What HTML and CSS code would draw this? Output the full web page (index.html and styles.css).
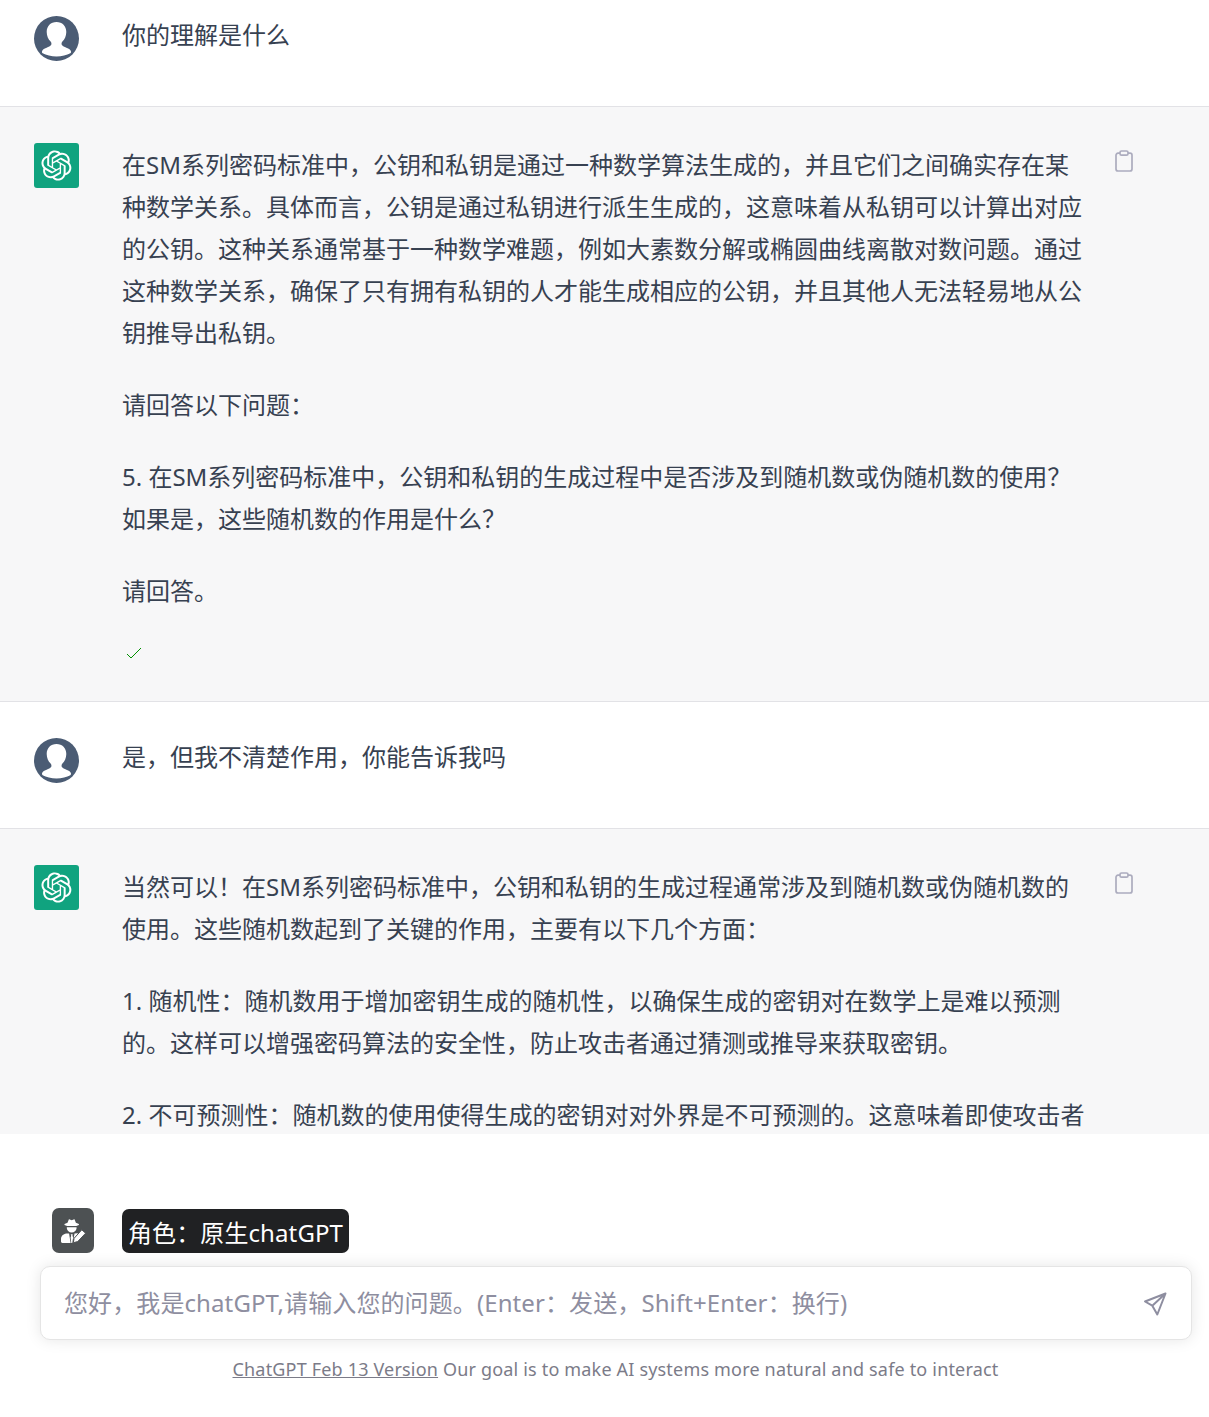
FILE: index.html
```html
<!DOCTYPE html>
<html lang="zh">
<head>
    <meta charset="utf-8">
    <title>ChatGPT</title>
    <link rel="stylesheet" href="styles.css">
</head>
<body>

    <svg class="defs" width="0" height="0">
        <symbol id="logo" viewBox="0 0 41 41">
            <path fill="currentColor" d="M37.5324 16.8707C37.9808 15.5241 38.1363 14.0974 37.9886 12.6859C37.8409 11.2744 37.3934 9.91076 36.676 8.68622C35.6126 6.83404 33.9882 5.3676 32.0373 4.4985C30.0864 3.62941 27.9098 3.40259 25.8215 3.85078C24.8796 2.7893 23.7219 1.94125 22.4257 1.36341C21.1295 0.785575 19.7249 0.491269 18.3058 0.500197C16.1708 0.495044 14.0893 1.16803 12.3614 2.42214C10.6335 3.67624 9.34853 5.44666 8.6917 7.47815C7.30085 7.76286 5.98686 8.3414 4.8377 9.17505C3.68854 10.0087 2.73073 11.0782 2.02839 12.312C0.956464 14.1591 0.498905 16.2988 0.721698 18.4228C0.944492 20.5467 1.83612 22.5449 3.268 24.1293C2.81966 25.4759 2.66413 26.9026 2.81182 28.3141C2.95951 29.7256 3.40701 31.0892 4.12437 32.3138C5.18791 34.1659 6.8123 35.6322 8.76321 36.5013C10.7141 37.3704 12.8907 37.5973 14.9789 37.1492C15.9208 38.2107 17.0786 39.0587 18.3747 39.6366C19.6709 40.2144 21.0755 40.5087 22.4946 40.4998C24.6307 40.5054 26.7133 39.8321 28.4418 38.5772C30.1704 37.3223 31.4556 35.5506 32.1119 33.5179C33.5027 33.2332 34.8167 32.6547 35.9659 31.821C37.115 30.9874 38.0728 29.9178 38.7752 28.684C39.8458 26.8371 40.3023 24.6979 40.0789 22.5748C39.8556 20.4517 38.9639 18.4544 37.5324 16.8707ZM22.4978 37.8849C20.7443 37.8874 19.0459 37.2733 17.6994 36.1501C17.7601 36.117 17.8666 36.0586 17.936 36.0161L25.9004 31.4156C26.1003 31.3019 26.2663 31.137 26.3813 30.9378C26.4964 30.7386 26.5563 30.5124 26.5549 30.2825V19.0542L29.9213 20.998C29.9389 21.0068 29.9541 21.0198 29.9656 21.0359C29.977 21.052 29.9842 21.0707 29.9867 21.0902V30.3889C29.9842 32.375 29.1946 34.2791 27.7909 35.6841C26.3872 37.0892 24.4838 37.8806 22.4978 37.8849ZM6.39227 31.0064C5.51397 29.4888 5.19742 27.7107 5.49804 25.9832C5.55718 26.0187 5.66048 26.0818 5.73461 26.1244L13.699 30.7248C13.8975 30.8408 14.1233 30.902 14.3532 30.902C14.583 30.902 14.8088 30.8408 15.0073 30.7248L24.731 25.1103V28.9979C24.7321 29.0177 24.7283 29.0376 24.7199 29.0556C24.7115 29.0736 24.6988 29.0893 24.6829 29.1012L16.6317 33.7497C14.9096 34.7416 12.8643 35.0097 10.9447 34.4954C9.02506 33.9811 7.38785 32.7263 6.39227 31.0064ZM4.29707 13.6194C5.17156 12.0998 6.55279 10.9364 8.19885 10.3327C8.19885 10.4013 8.19491 10.5228 8.19491 10.6071V19.808C8.19351 20.0378 8.25334 20.2638 8.36823 20.4629C8.48312 20.6619 8.64893 20.8267 8.84863 20.9404L18.5723 26.5542L15.206 28.4979C15.1894 28.5089 15.1703 28.5155 15.1505 28.5173C15.1307 28.5191 15.1107 28.516 15.0924 28.5082L7.04046 23.8557C5.32135 22.8601 4.06716 21.2235 3.55289 19.3046C3.03862 17.3858 3.30624 15.3413 4.29707 13.6194ZM31.955 20.0556L22.2312 14.4411L25.5976 12.4981C25.6142 12.4872 25.6333 12.4805 25.6531 12.4787C25.6729 12.4769 25.6928 12.4801 25.7111 12.4879L33.7631 17.1364C34.9967 17.849 36.0017 18.8982 36.6606 20.1613C37.3194 21.4244 37.6047 22.849 37.4832 24.2684C37.3617 25.6878 36.8382 27.0432 35.9743 28.1759C35.1103 29.3086 33.9415 30.1717 32.6047 30.6641C32.6047 30.5947 32.6047 30.4733 32.6047 30.3889V21.188C32.6066 20.9586 32.5474 20.7328 32.4332 20.5338C32.319 20.3348 32.154 20.1698 31.955 20.0556ZM35.3055 15.0128C35.2464 14.9765 35.1431 14.9142 35.069 14.8717L27.1045 10.2712C26.906 10.1554 26.6803 10.0943 26.4504 10.0943C26.2206 10.0943 25.9948 10.1554 25.7963 10.2712L16.0726 15.8858V11.9982C16.0715 11.9783 16.0753 11.9585 16.0837 11.9405C16.0921 11.9225 16.1048 11.9068 16.1207 11.8949L24.1719 7.25025C25.4053 6.53903 26.8158 6.19376 28.2383 6.25482C29.6608 6.31589 31.0364 6.78077 32.2044 7.59508C33.3723 8.40939 34.2842 9.53945 34.8334 10.8531C35.3826 12.1667 35.5464 13.6095 35.3055 15.0128ZM14.2424 21.9419L10.8752 19.9981C10.8576 19.9893 10.8423 19.9763 10.8309 19.9602C10.8195 19.9441 10.8122 19.9254 10.8098 19.9058V10.6071C10.8107 9.18295 11.2173 7.78848 11.9819 6.58696C12.7466 5.38544 13.8377 4.42659 15.1275 3.82264C16.4173 3.21869 17.8524 2.99464 19.2649 3.1767C20.6775 3.35876 22.0089 3.93941 23.1034 4.85067C23.0427 4.88379 22.937 4.94215 22.8668 4.98473L14.9024 9.58517C14.7025 9.69878 14.5366 9.86356 14.4215 10.0626C14.3065 10.2616 14.2466 10.4877 14.2479 10.7175L14.2424 21.9419ZM16.071 17.9991L20.4018 15.4978L24.7325 17.9975V22.9985L20.4018 25.4983L16.071 22.9985V17.9991Z"/>
        </symbol>
        <symbol id="person" viewBox="0 0 45 45">
            <circle cx="22.5" cy="22.5" r="22.5" fill="#4b5c74"/>
            <path fill="#fff" d="M22.5 6c-5.800 0-9.800 4.100-9.800 9.900 0 4 1.600 7.300 3.900 9.600 .9 .9 1.100 2.500 .5 3.500-.8 1.300-2.500 1.900-4.500 2.700-2.600 1-4.200 2-4.600 3.700-.2 .7 .1 1.400 .7 1.800 3.400 1.900 8.600 3.300 13.800 3.300s10.400-1.400 13.800-3.300c.6-.4 .9-1.100 .7-1.800-.4-1.700-2-2.700-4.600-3.700-2-.8-3.700-1.400-4.500-2.700-.6-1-.4-2.600 .5-3.500 2.300-2.300 3.900-5.600 3.900-9.600 0-5.800-4-9.900-9.800-9.900z"/>
        </symbol>
        <symbol id="clip" viewBox="0 0 18 22">
            <path fill="none" stroke="currentColor" stroke-width="1.700" stroke-linejoin="round" d="M5 3.200H3a2 2 0 0 0-2 2V19a2 2 0 0 0 2 2h12a2 2 0 0 0 2-2V5.200a2 2 0 0 0-2-2h-2"/>
            <rect x="5" y="1" width="8" height="4.200" rx="1.500" fill="none" stroke="currentColor" stroke-width="1.700"/>
        </symbol>
    </svg>

    <div class="chat">
        <div class="row">
            <svg class="avatar"><use href="#person"/></svg>
            <div class="text"><p>你的理解是什么</p></div>
        </div>

        <div class="row bot">
            <div class="avatar logo"><svg width="31" height="31"><use href="#logo"/></svg></div>
            <div class="text">
                <p>在SM系列密码标准中，公钥和私钥是通过一种数学算法生成的，并且它们之间确实存在某种数学关系。具体而言，公钥是通过私钥进行派生生成的，这意味着从私钥可以计算出对应的公钥。这种关系通常基于一种数学难题，例如大素数分解或椭圆曲线离散对数问题。通过这种数学关系，确保了只有拥有私钥的人才能生成相应的公钥，并且其他人无法轻易地从公钥推导出私钥。</p>
                <p>请回答以下问题：</p>
                <p>5. 在SM系列密码标准中，公钥和私钥的生成过程中是否涉及到随机数或伪随机数的使用？如果是，这些随机数的作用是什么？</p>
                <p>请回答。</p>
                <svg class="check" width="16" height="13" viewBox="0 0 16 13" shape-rendering="crispEdges"><path fill="none" stroke="#009000" stroke-width="1.400" d="M1 7l4 4L15 1"/></svg>
            </div>
            <svg class="copy"><use href="#clip"/></svg>
        </div>

        <div class="row">
            <svg class="avatar"><use href="#person"/></svg>
            <div class="text"><p>是，但我不清楚作用，你能告诉我吗</p></div>
        </div>

        <div class="row bot">
            <div class="avatar logo"><svg width="31" height="31"><use href="#logo"/></svg></div>
            <div class="text">
                <p>当然可以！在SM系列密码标准中，公钥和私钥的生成过程通常涉及到随机数或伪随机数的使用。这些随机数起到了关键的作用，主要有以下几个方面：</p>
                <p>1. 随机性：随机数用于增加密钥生成的随机性，以确保生成的密钥对在数学上是难以预测的。这样可以增强密码算法的安全性，防止攻击者通过猜测或推导来获取密钥。</p>
                <p>2. 不可预测性：随机数的使用使得生成的密钥对对外界是不可预测的。这意味着即使攻击者</p>
            </div>
            <svg class="copy"><use href="#clip"/></svg>
        </div>
    </div>

    <div class="bottom">
        <div class="role">
            <div class="role-icon">
                <svg width="26" height="26" viewBox="0 0 26 26">
                    <path fill="#fff" d="M7.500 4.800l1.200-3c.2-.5 .6-.6 1-.4l2 .9 2-.9c.4-.2 .8-.1 1 .4l1.200 3 3 1.200v1l-2.600 1H7.100L4.500 7V6z"/>
                    <path fill="#fff" d="M7.300 9.300h8.800c.5 0 .6 .4 .5 1-.4 2.500-2.300 4.200-4.900 4.200s-4.500-1.700-4.900-4.200c-.1-.6 0-1 .5-1z"/>
                    <path fill="#fff" d="M6.300 15.400l2.800 .2 1.500 9.400H2.400c-.8 0-1.400-.6-1.400-1.400v-2.500c0-3 2.200-5.300 5.300-5.700z"/>
                    <path fill="#fff" d="M10.700 16.200h2l-.2 1.600 .6 1.600-.8 5.600h-1l-.7-5.600 .6-1.600z"/>
                    <path fill="#fff" d="M14.500 15.600l2.800-.3 1 .4-4.800 5.500z"/>
                    <path fill="#fff" stroke="#4d5153" stroke-width="1" d="M21.800 11.800l3.800 3.400-7.900 8.400-4.400 1.100 .8-4.400z"/>
                </svg>
            </div>
            <div class="role-tag">角色：原生chatGPT</div>
        </div>

        <div class="input-box">
            <div class="placeholder">您好，我是chatGPT,请输入您的问题。(Enter：发送，Shift+Enter：换行)</div>
            <svg class="send" width="24" height="24" viewBox="0 0 24 24"><path fill="none" stroke="currentColor" stroke-width="2" stroke-linejoin="round" d="M22.500 1.500L2 9.500l7.300 4.200 5 8.800zM22.500 1.500L9.300 13.700"/></svg>
        </div>

        <div class="footer"><a href="#">ChatGPT Feb 13 Version</a> Our goal is to make AI systems more natural and safe to interact</div>
    </div>

</body>
</html>
```

FILE: styles.css
```css
body {
    margin: 0;
    background: #fff;
    color: #374151;
    font-family: "Noto Sans", "Noto Sans CJK SC", sans-serif;
    font-size: 24px;
}
.defs { position: absolute; }

.chat {
    height: 1134px;
    overflow: hidden;
}
.row {
    display: flex;
    align-items: flex-start;
    padding: 36px 0 45px 34px;
    border-bottom: 1px solid #e2e2e6;
}
.row:first-child { margin-top: -20px; }
.bot {
    background: #f7f7f8;
    padding-bottom: 41px;
}

.avatar {
    width: 45px;
    height: 45px;
    flex: none;
    margin-right: 43px;
}
.logo {
    display: flex;
    align-items: center;
    justify-content: center;
    background: #10a37f;
    border-radius: 3px;
    color: #fff;
}
.text {
    width: 964px;
    flex: none;
    margin-top: -2px;
}
.bot .text { margin-top: 1px; }
.text p {
    margin: 0 0 30px;
    line-height: 42px;
}
.text p:last-of-type { margin-bottom: 0; }
.check {
    display: block;
    margin: 35px 0 0 4px;
}
.copy {
    width: 18px;
    height: 22px;
    flex: none;
    margin: 7px 0 0 29px;
    color: #acacbe;
}

.bottom { padding-top: 74px; }
.role {
    display: flex;
    align-items: flex-start;
    padding-left: 52px;
}
.role-icon {
    width: 42px;
    height: 45px;
    flex: none;
    display: flex;
    align-items: center;
    justify-content: center;
    background: #4d5153;
    border-radius: 7px;
    margin-right: 28px;
}
.role-tag {
    background: #202123;
    color: #fff;
    border-radius: 7px;
    margin-top: 1px;
    padding: 0 6px;
    line-height: 48px;
    height: 44px;
    letter-spacing: 0.1px;
}
.input-box {
    display: flex;
    align-items: center;
    justify-content: space-between;
    height: 72px;
    margin: 13px 17px 0 40px;
    padding: 0 24px 0 23px;
    background: #fff;
    border: 1px solid #e5e5e5;
    border-radius: 10px;
    box-shadow: 0 0 15px rgba(0, 0, 0, 0.1);
}
.placeholder {
    color: #8e8ea0;
    margin-top: -3px;
    letter-spacing: 0.1px;
}
.send { color: #8e8ea0; flex: none; margin-top: 2px; }
.footer {
    margin-top: 16px;
    text-align: center;
    padding-left: 22px;
    font-size: 18px;
    line-height: 27px;
    letter-spacing: 0.18px;
    color: #7b7b88;
}
.footer a { color: #7b7b88; }
```
